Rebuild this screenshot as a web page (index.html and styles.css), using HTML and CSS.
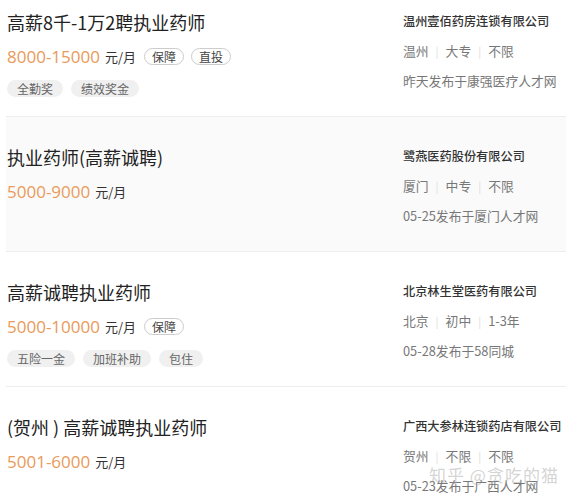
FILE: index.html
```html
<!DOCTYPE html>
<html lang="zh-CN">
<head>
    <meta charset="UTF-8">
    <meta name="viewport" content="width=device-width, initial-scale=1.0">
    <title>执业药师招聘</title>
    <link rel="stylesheet" href="styles.css">
</head>
<body>
    <div class="job-list">
        <!-- 1 -->
        <div class="job">
            <div class="job-main">
                <div class="job-title">高薪8千-1万2聘执业药师</div>
                <div class="job-salary">
                    <span class="salary-num">8000-15000</span>
                    <span class="salary-unit">元/月</span>
                    <span class="badge">保障</span>
                    <span class="badge">直投</span>
                </div>
                <div class="job-tags">
                    <span class="tag">全勤奖</span>
                    <span class="tag">绩效奖金</span>
                </div>
            </div>
            <div class="job-side">
                <div class="company">温州壹佰药房连锁有限公司</div>
                <div class="meta">温州<span class="sep">|</span>大专<span class="sep">|</span>不限</div>
                <div class="source">昨天发布于康强医疗人才网</div>
            </div>
        </div>

        <!-- 2 -->
        <div class="job job-alt">
            <div class="job-main">
                <div class="job-title">执业药师(高薪诚聘)</div>
                <div class="job-salary">
                    <span class="salary-num">5000-9000</span>
                    <span class="salary-unit">元/月</span>
                </div>
            </div>
            <div class="job-side">
                <div class="company">鹭燕医药股份有限公司</div>
                <div class="meta">厦门<span class="sep">|</span>中专<span class="sep">|</span>不限</div>
                <div class="source">05-25发布于厦门人才网</div>
            </div>
        </div>

        <!-- 3 -->
        <div class="job">
            <div class="job-main">
                <div class="job-title">高薪诚聘执业药师</div>
                <div class="job-salary">
                    <span class="salary-num">5000-10000</span>
                    <span class="salary-unit">元/月</span>
                    <span class="badge">保障</span>
                </div>
                <div class="job-tags">
                    <span class="tag">五险一金</span>
                    <span class="tag">加班补助</span>
                    <span class="tag">包住</span>
                </div>
            </div>
            <div class="job-side">
                <div class="company">北京林生堂医药有限公司</div>
                <div class="meta">北京<span class="sep">|</span>初中<span class="sep">|</span>1-3年</div>
                <div class="source">05-28发布于58同城</div>
            </div>
        </div>

        <!-- 4 -->
        <div class="job">
            <div class="job-main">
                <div class="job-title">(贺州 ) 高薪诚聘执业药师</div>
                <div class="job-salary">
                    <span class="salary-num">5001-6000</span>
                    <span class="salary-unit">元/月</span>
                </div>
            </div>
            <div class="job-side">
                <div class="company">广西大参林连锁药店有限公司</div>
                <div class="meta">贺州<span class="sep">|</span>不限<span class="sep">|</span>不限</div>
                <div class="source">05-23发布于广西人才网</div>
            </div>
        </div>
    </div>

    <div class="watermark">知乎 @贪吃的猫</div>
</body>
</html>
```

FILE: styles.css
```css
body {
    margin: 0;
    font-family: "Noto Sans CJK SC", "Noto Sans", sans-serif;
    background: #fff;
    color: #333;
    overflow: hidden;
}

.job-list {
    margin-top: -18px;
}

.job {
    display: flex;
    height: 135px;
    box-sizing: border-box;
    margin-left: 6px;
    padding-left: 1px;
    border-bottom: 1px solid #ededed;
}

.job-alt {
    background: #fafafa;
}

.job-main {
    flex: 1;
    padding-top: 26px;
}

.job-title {
    font-size: 18px;
    line-height: 28px;
    color: #222;
}

.job-salary {
    display: flex;
    align-items: center;
    margin-top: 7px;
    height: 26px;
}

.salary-num {
    font-family: "Open Sans", "Noto Sans", sans-serif;
    font-size: 17px;
    color: #e99a5a;
}

.salary-unit {
    font-size: 13px;
    color: #333;
    margin-left: 5px;
}

.badge {
    margin-left: 8px;
    height: 15px;
    line-height: 15px;
    padding: 0 7px;
    font-size: 12px;
    color: #444;
    border: 1px solid #ccc;
    border-radius: 9px;
}

.badge + .badge {
    margin-left: 7px;
}

.job-tags {
    display: flex;
    gap: 8px;
    margin-top: 11px;
}

.tag {
    height: 17px;
    line-height: 17px;
    padding: 0 10px;
    font-size: 12px;
    color: #666;
    background: #f0f0f0;
    border-radius: 9px;
}

.job-side {
    width: 163px;
    padding-top: 24px;
}

.company,
.meta,
.source {
    line-height: 30px;
    font-size: 12.8px;
    white-space: nowrap;
}

.company {
    font-size: 12.2px;
    color: #333;
    font-weight: 500;
}

.meta,
.source {
    color: #777;
}

.sep {
    color: #ddd;
    margin: 0 7px;
    font-size: 11px;
}

.watermark {
    position: absolute;
    left: 429px;
    top: 462px;
    font-size: 17px;
    white-space: nowrap;
    color: rgba(170, 170, 170, 0.5);
    letter-spacing: 1px;
    pointer-events: none;
}
```
